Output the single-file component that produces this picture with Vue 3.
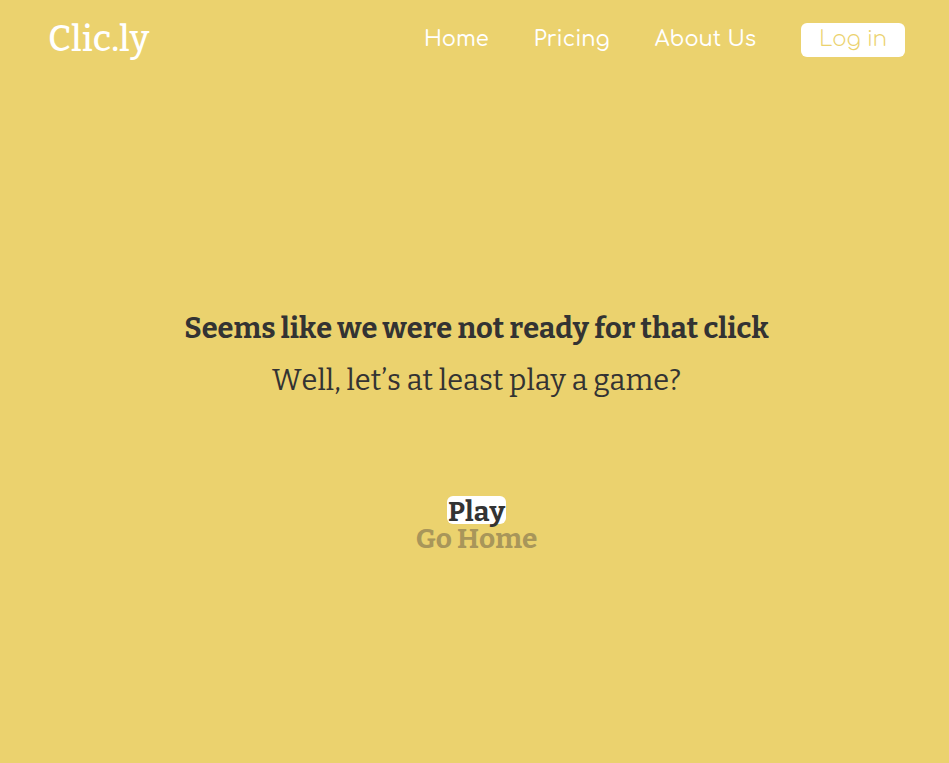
<script setup>
const links = ['Home', 'Pricing', 'About Us']
</script>

<template>
  <div class="page">
    <header class="bar">
      <a class="brand" href="#">Clic.ly</a>
      <nav class="nav">
        <a v-for="link in links" :key="link" class="link" href="#">{{ link }}</a>
        <button class="login" type="button">Log in</button>
      </nav>
    </header>
    <main class="main">
      <h1 class="title">Seems like we were not ready for that click</h1>
      <p class="subtitle">Well, let’s at least play a game?</p>
      <div class="actions">
        <button class="play" type="button">Play</button>
        <a class="home" href="#">Go Home</a>
      </div>
    </main>
  </div>
</template>

<style>
body {
  margin: 0;
  background: #ebd26e;
}
</style>

<style scoped>
.page {
  min-height: 100vh;
  display: flex;
  flex-direction: column;
  background: #ebd26e;
  color: #333;
  font-family: Bitter, "Liberation Serif", serif;
  font-size: 29px;
  font-kerning: none;
}
.bar {
  display: flex;
  align-items: center;
  justify-content: space-between;
  height: 80px;
  padding: 0 44px 0 48px;
}
.brand {
  color: #fff;
  font-size: 36px;
  font-weight: 500;
  line-height: 44px;
  padding-bottom: 2px;
  text-decoration: none;
}
.nav {
  display: flex;
  align-items: center;
  gap: 45px;
  font-family: Comfortaa, Lato, sans-serif;
  font-size: 21px;
  font-kerning: auto;
  line-height: 32px;
}
.link {
  padding-bottom: 2px;
  color: #fff;
  font-weight: 500;
  text-decoration: none;
}
.login {
  height: 34px;
  padding: 0 18px 2px;
  border: 0;
  border-radius: 6px;
  background: #fff;
  color: #ebd26e;
  font: inherit;
  font-weight: 300;
}
.main {
  display: flex;
  flex-direction: column;
  align-items: center;
  padding: 232px 20px 0 24px;
  text-align: center;
}
.title {
  margin: 0;
  font-size: 29px;
  font-weight: 700;
  line-height: 34px;
}
.subtitle {
  margin: 18px 0 98px;
  font-size: 29px;
  line-height: 34px;
}
.actions {
  display: flex;
  flex-direction: column;
  align-items: center;
  font-size: 28px;
  font-weight: 700;
}
.play {
  height: 28px;
  padding: 2px 1px 0;
  border: 0;
  border-radius: 6px;
  background: #fff;
  color: #333;
  font: inherit;
  font-kerning: none;
  line-height: 28px;
}
.home {
  color: #a8965a;
  line-height: 30px;
  text-decoration: none;
}
</style>
